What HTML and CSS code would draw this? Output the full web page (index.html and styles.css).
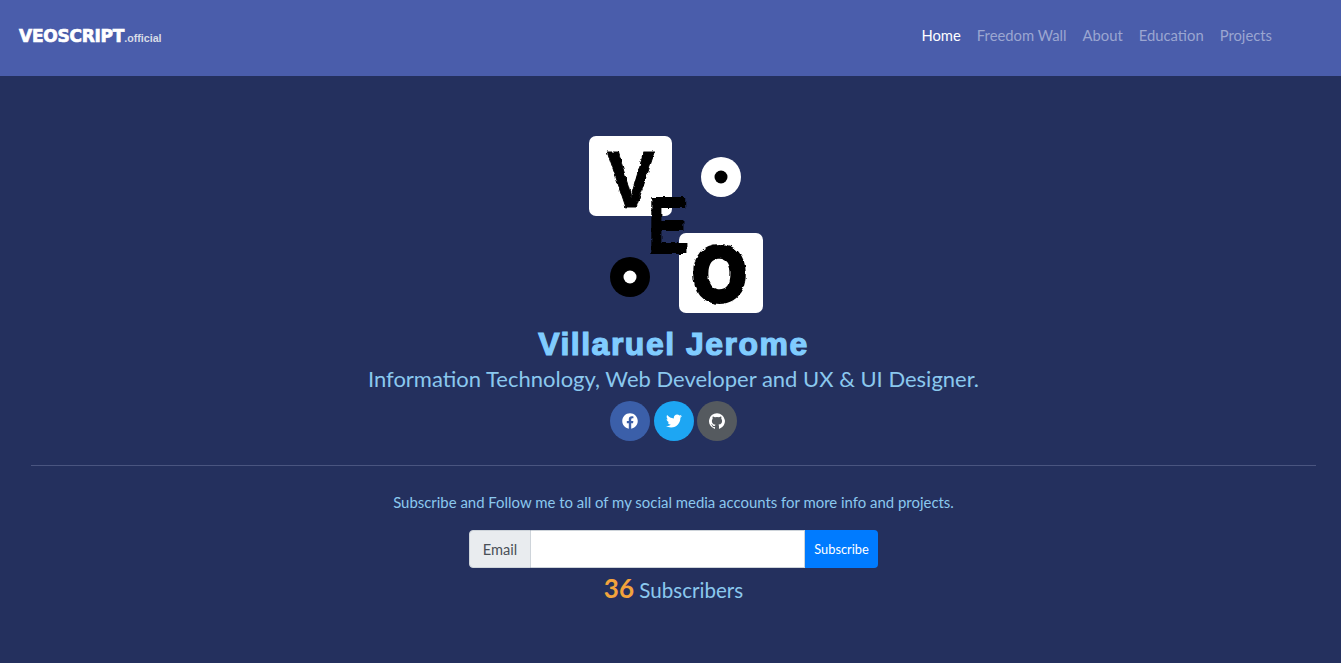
FILE: index.html
```html
<!DOCTYPE html>
<html lang="en">
<head>
<meta charset="utf-8">
<title>VEOSCRIPT.official</title>
<link rel="stylesheet" href="styles.css">
</head>
<body>
<header class="navbar">
  <a class="brand" href="#"><span class="brand-name">VEOSCRIPT</span><span class="brand-suffix">.official</span></a>
  <nav class="nav-links">
    <a class="nav-link active" href="#">Home</a>
    <a class="nav-link" href="#">Freedom Wall</a>
    <a class="nav-link" href="#">About</a>
    <a class="nav-link" href="#">Education</a>
    <a class="nav-link" href="#">Projects</a>
  </nav>
</header>
<main class="main">
  <svg class="logo" width="179" height="178" viewBox="0 0 179 178" role="img" aria-label="VEO logo">
    <defs>
      <filter id="brush" x="-10%" y="-10%" width="120%" height="120%">
        <feTurbulence type="fractalNoise" baseFrequency="0.18" numOctaves="2" seed="7"/>
        <feDisplacementMap in="SourceGraphic" scale="4" xChannelSelector="R" yChannelSelector="G"/>
      </filter>
    </defs>
    <rect x="5" y="0" width="83" height="80" rx="7" fill="#fff"/>
    <rect x="95" y="97" width="84" height="80" rx="7" fill="#fff"/>
    <circle cx="137" cy="41" r="20" fill="#fff"/>
    <circle cx="137" cy="41" r="6.5" fill="#000"/>
    <circle cx="46" cy="141" r="20" fill="#000"/>
    <circle cx="46" cy="141" r="6.5" fill="#fff"/>
    <g filter="url(#brush)" class="logo-letters">
      <text x="23" y="71" textLength="48" lengthAdjust="spacingAndGlyphs" class="logo-v">V</text>
      <text x="64" y="117" textLength="40" lengthAdjust="spacingAndGlyphs" class="logo-e">E</text>
      <text x="109" y="164" textLength="53" lengthAdjust="spacingAndGlyphs" class="logo-o">O</text>
    </g>
  </svg>
  <h1 class="name">Villaruel Jerome</h1>
  <p class="tagline">Information Technology, Web Developer and UX &amp; UI Designer.</p>
  <div class="socials">
    <a class="social social-fb" href="#" aria-label="Facebook">
      <svg width="16" height="16" viewBox="0 0 512 512"><path fill="#fff" d="M504 256C504 119 393 8 256 8S8 119 8 256c0 123.78 90.69 226.38 209.25 245V327.69h-63V256h63v-54.64c0-62.15 37-96.48 93.67-96.48 27.14 0 55.52 4.84 55.52 4.84v61h-31.28c-30.8 0-40.41 19.12-40.41 38.73V256h68.78l-11 71.69h-57.78V501C413.31 482.38 504 379.78 504 256z"/></svg>
    </a>
    <a class="social social-tw" href="#" aria-label="Twitter">
      <svg width="16" height="16" viewBox="0 0 512 512"><path fill="#fff" d="M459.37 151.716c.325 4.548.325 9.097.325 13.645 0 138.72-105.583 298.558-298.558 298.558-59.452 0-114.68-17.219-161.137-47.106 8.447.974 16.568 1.299 25.34 1.299 49.055 0 94.213-16.568 130.274-44.832-46.132-.975-84.792-31.188-98.112-72.772 6.498.974 12.995 1.624 19.818 1.624 9.421 0 18.843-1.3 27.614-3.573-48.081-9.747-84.143-51.98-84.143-102.985v-1.299c13.969 7.797 30.214 12.67 47.431 13.319-28.264-18.843-46.781-51.005-46.781-87.391 0-19.492 5.197-37.36 14.294-52.954 51.655 63.675 129.3 105.258 216.365 109.807-1.624-7.797-2.599-15.918-2.599-24.04 0-57.828 46.782-104.934 104.934-104.934 30.213 0 57.502 12.67 76.67 33.137 23.715-4.548 46.456-13.32 66.599-25.34-7.798 24.366-24.366 44.833-46.132 57.827 21.117-2.273 41.584-8.122 60.426-16.243-14.292 20.791-32.161 39.308-52.628 54.253z"/></svg>
    </a>
    <a class="social social-gh" href="#" aria-label="GitHub">
      <svg width="16" height="16" viewBox="0 0 24 24"><path fill="#fff" d="M12 .3a12 12 0 0 0-3.8 23.38c.6.12.83-.26.83-.57L9 21.07c-3.34.72-4.04-1.61-4.04-1.61-.55-1.39-1.34-1.76-1.34-1.76-1.08-.74.09-.73.09-.73 1.2.09 1.83 1.24 1.83 1.24 1.08 1.83 2.81 1.3 3.5 1 .1-.78.42-1.31.76-1.61-2.67-.3-5.47-1.33-5.47-5.93 0-1.31.47-2.38 1.24-3.22-.14-.3-.54-1.52.1-3.18 0 0 1-.32 3.3 1.23a11.5 11.5 0 0 1 6 0c2.28-1.55 3.29-1.23 3.29-1.23.64 1.66.24 2.88.12 3.18a4.65 4.65 0 0 1 1.23 3.22c0 4.61-2.8 5.63-5.48 5.92.42.36.81 1.1.81 2.22l-.01 3.29c0 .31.2.69.82.57A12 12 0 0 0 12 .3"/></svg>
    </a>
  </div>
  <hr class="rule">
  <p class="invite">Subscribe and Follow me to all of my social media accounts for more info and projects.</p>
  <form class="subscribe">
    <span class="addon">Email</span>
    <input class="email" type="email" aria-label="Email">
    <button class="submit" type="button">Subscribe</button>
  </form>
  <p class="count"><strong class="count-num">36</strong> Subscribers</p>
</main>
</body>
</html>
```

FILE: styles.css
```css
* { box-sizing: border-box; }
html, body { height: 100%; }
body {
  margin: 0;
  background: #24305e;
  font-family: "Lato", "Liberation Sans", sans-serif;
  color: #8bc8ee;
  overflow: hidden;
}
a { text-decoration: none; }

.navbar {
  height: 76px;
  background: #4a5dab;
  display: flex;
  align-items: center;
  justify-content: space-between;
  padding: 0 69px 6px 19px;
}
.brand { display: flex; align-items: baseline; margin-top: 2px; color: #fff; }
.brand-name {
  font-family: "DejaVu Sans", sans-serif;
  font-weight: 700;
  font-size: 17px;
  letter-spacing: -0.25px;
  -webkit-text-stroke: 0.7px #fff;
}
.brand-suffix {
  font-family: "Liberation Sans", sans-serif;
  font-weight: 700;
  font-size: 10.7px;
  color: #d8dbe6;
}
.nav-links { display: flex; gap: 16px; }
.nav-link { font-size: 14.8px; color: #9ba6d1; }
.nav-link.active { color: #fff; }

.main {
  display: flex;
  flex-direction: column;
  align-items: center;
  padding: 60px 25px 0 31px;
}
.logo { display: block; overflow: visible; }
.logo-letters { font-family: "Liberation Sans", sans-serif; font-weight: 700; fill: #000; }
.logo-v { font-size: 80px; stroke: #000; stroke-width: 1px; }
.logo-e { font-size: 80px; stroke: #000; stroke-width: 2px; }
.logo-o { font-size: 76px; stroke: #000; stroke-width: 6px; }

.name {
  margin: 11px 0 0;
  font-family: "Liberation Sans", sans-serif;
  font-size: 32px;
  line-height: 38px;
  font-weight: 700;
  letter-spacing: 1.5px;
  color: #80ccff;
  -webkit-text-stroke: 1.2px #80ccff;
}
.tagline {
  margin: 1px 0 0;
  font-size: 22px;
  line-height: 30px;
  color: #8bc8ee;
}
.socials { display: flex; gap: 3.5px; margin-top: 7px; }
.social {
  width: 40px;
  height: 40px;
  border-radius: 50%;
  display: flex;
  align-items: center;
  justify-content: center;
}
.social-fb { background: #3b5fa9; }
.social-tw { background: #1da6f3; }
.social-gh { background: #555a5f; }

.rule {
  width: 100%;
  margin: 24px 0 0;
  border: 0;
  border-top: 1px solid #4a5580;
}
.invite { margin: 26px 0 0; font-size: 14.93px; line-height: 20px; color: #8bc8ee; }
.subscribe { display: flex; width: 409px; height: 38px; margin-top: 18px; }
.addon {
  width: 62px;
  display: flex;
  align-items: center;
  justify-content: center;
  background: #e9ecef;
  border: 1px solid #ced4da;
  border-radius: 4px 0 0 4px;
  color: #495057;
  font-size: 14.6px;
}
.email {
  flex: 1;
  min-width: 0;
  border: 1px solid #ced4da;
  border-left: 0;
  background: #fff;
  padding: 0;
}
.submit {
  width: 73px;
  border: 0;
  border-radius: 0 4px 4px 0;
  background: #007bff;
  color: #fff;
  font-family: inherit;
  font-size: 12.8px;
  padding: 0;
}
.count { margin: 4px 0 0; font-size: 20.6px; line-height: 32px; color: #8bc8ee; }
.count-num { font-size: 26px; font-weight: 700; color: #f2a33c; }
```
